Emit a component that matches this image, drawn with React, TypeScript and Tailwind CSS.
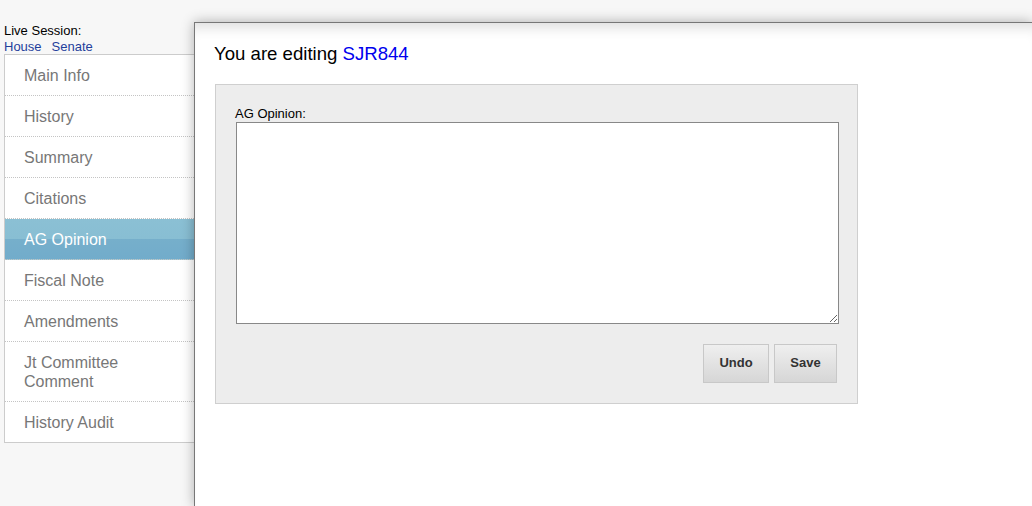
import React from 'react';

const navItems = [
  'Main Info',
  'History',
  'Summary',
  'Citations',
  'AG Opinion',
  'Fiscal Note',
  'Amendments',
  'Jt Committee Comment',
  'History Audit',
];

export default function App() {
  const active = 'AG Opinion';

  return (
    <div className="flex h-[506px] w-[1032px] overflow-hidden bg-[#f7f7f7] font-['Liberation_Sans',Arial,sans-serif]">
      {/* Left column */}
      <div className="w-[194px] shrink-0 pl-1 pt-[23px]">
        <div className="text-[13px] leading-[16px] text-black">Live Session:</div>
        <div className="flex gap-[10px] text-[13px] leading-[15px] text-[#1f3f9c]">
          <a href="#">House</a>
          <a href="#">Senate</a>
        </div>

        {/* Nav */}
        <ul className="w-[190px] border-y border-l border-[#cccccc] bg-white">
          {navItems.map((item, i) => {
            const isActive = item === active;
            const isLast = i === navItems.length - 1;
            const twoLine = item === 'Jt Committee Comment';
            return (
              <li
                key={item}
                className={`pl-[19px] pr-4 text-[16px] ${
                  twoLine ? 'pb-[10px] pt-[11px] leading-[19px]' : 'pb-[10px] pt-[12px] leading-[18px]'
                } ${isLast ? '' : 'border-b border-dotted border-[#c4c4c4]'} ${
                  isActive
                    ? 'bg-[linear-gradient(#8bc0d4_0%,#88bed3_50%,#76afcb_50%,#72accb_100%)] text-white'
                    : 'text-[#777777]'
                }`}
              >
                <span className={twoLine ? 'block max-w-[110px]' : ''}>{item}</span>
              </li>
            );
          })}
        </ul>
      </div>

      {/* Main panel */}
      <div className="relative z-10 mt-[22px] flex-1 border-l border-t border-[#777777] bg-white pl-5 pt-[19px] shadow-[inset_0_14px_14px_-10px_rgba(0,0,0,0.14),0_0_12px_rgba(0,0,0,0.3)]">
        <h1 className="-ml-px text-[18.6px] leading-[24px] text-black">
          You are editing <a href="#" className="text-[#0000ee]">SJR844</a>
        </h1>

        <div className="mt-[18px] w-[643px] border border-[#cfcfcf] bg-[#ededed] px-5 pb-5 pt-[21px]">
          <label className="-ml-px block text-[13px] leading-[16px] text-black">AG Opinion:</label>
          <textarea className="block h-[202px] w-[603px] border border-[#888888] bg-white outline-none" />
          <div className="mt-[20px] flex justify-end gap-[5px]">
            <button className="h-[39px] w-[66px] border border-[#c8c8c8] bg-[linear-gradient(#efefef,#d6d6d6)] pb-[2px] text-[13px] font-bold text-[#333333]">
              Undo
            </button>
            <button className="h-[39px] w-[63px] border border-[#c8c8c8] bg-[linear-gradient(#efefef,#d6d6d6)] pb-[2px] text-[13px] font-bold text-[#333333]">
              Save
            </button>
          </div>
        </div>
      </div>
    </div>
  );
}
